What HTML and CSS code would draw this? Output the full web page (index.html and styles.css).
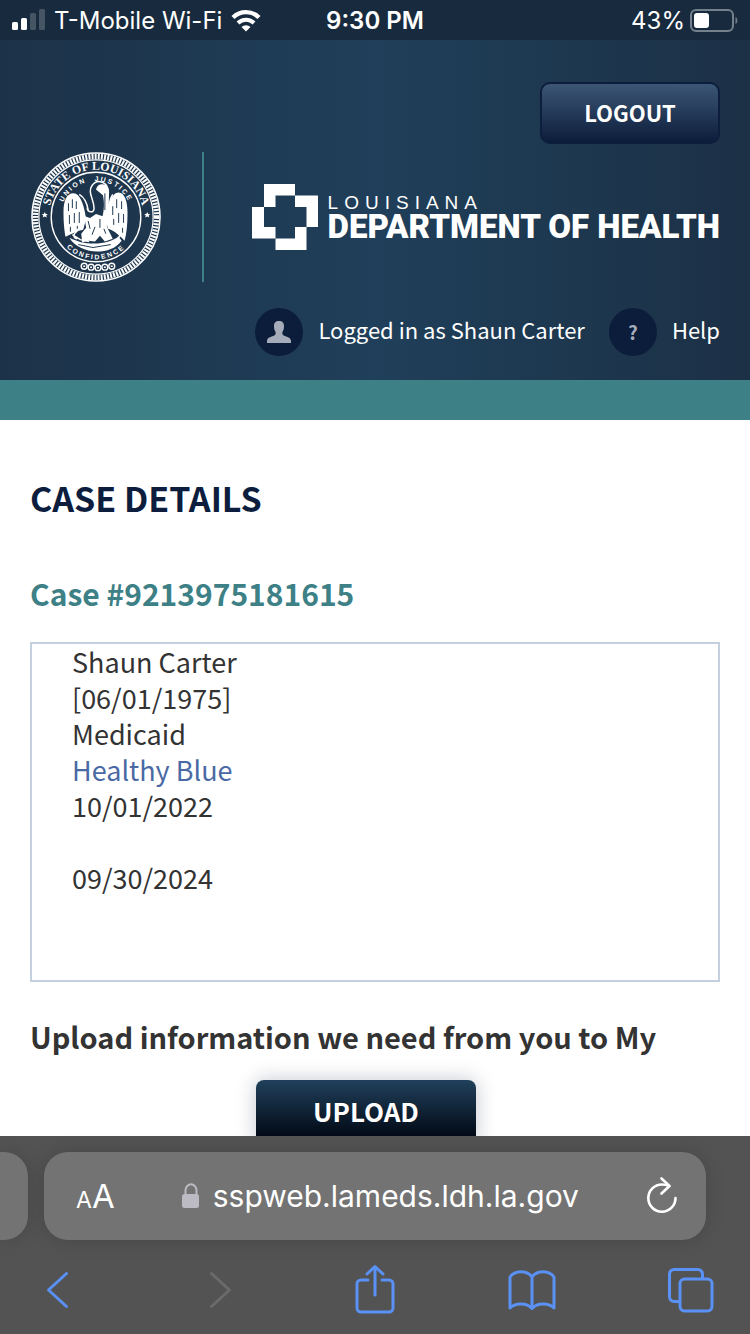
FILE: index.html
```
<!DOCTYPE html>
<html lang="en">
<head>
    <meta charset="UTF-8">
    <meta name="viewport" content="width=device-width, initial-scale=1.0">
    <title>Case Details</title>
    <link rel="stylesheet" href="styles.css">
</head>
<body>
    <div class="status-bar">
        <div class="carrier">
            <svg class="signal" width="33" height="22" viewBox="0 0 33 22">
                <rect x="0" y="13" width="6" height="8" rx="1.5" fill="#fff"/>
                <rect x="9" y="9" width="6" height="12" rx="1.5" fill="#fff"/>
                <rect x="18" y="4" width="6" height="17" rx="1.5" fill="#465564"/>
                <rect x="27" y="0" width="6" height="21" rx="1.5" fill="#465564"/>
            </svg>
            <span>T-Mobile Wi-Fi</span>
            <svg width="30" height="23" viewBox="0 0 30 23">
                <path d="M2 8.5a18.5 18.5 0 0 1 26 0" fill="none" stroke="#fff" stroke-width="4.4"/>
                <path d="M7 14a11.4 11.4 0 0 1 16 0" fill="none" stroke="#fff" stroke-width="4"/>
                <path d="M10.5 18a6.5 6.5 0 0 1 9 0L15 22.5z" fill="#fff"/>
            </svg>
        </div>
        <div class="clock">9:30 PM</div>
        <div class="battery">
            <span>43%</span>
            <svg width="48" height="23" viewBox="0 0 48 23">
                <rect x="1" y="1" width="42" height="21" rx="5" fill="none" stroke="#74808b" stroke-width="2"/>
                <rect x="4" y="4" width="15" height="15" rx="3" fill="#fff"/>
                <path d="M45.500 8c2.500 1 2.500 6 0 7z" fill="#74808b"/>
            </svg>
        </div>
    </div>

    <header class="header">
        <button type="button" class="logout">LOGOUT</button>

        <div class="brand">
            <svg class="seal" width="132" height="130" viewBox="0 0 132 132" role="img" aria-label="State of Louisiana seal">
                <defs>
                    <path id="arcOuter" d="M18 66a48 48 0 0 1 96 0"/>
                    <path id="arcInner" d="M29.500 66a36.500 36.500 0 0 1 73 0"/>
                    <path id="arcBottom" d="M23 66a43 43 0 0 0 86 0"/>
                </defs>
                <g fill="none" stroke="#fff">
                    <circle cx="66" cy="66" r="65" stroke-width="1.6"/>
                    <circle cx="66" cy="66" r="61.500" stroke-width="5.500" stroke-dasharray="2 1.200"/>
                    <circle cx="66" cy="66" r="58" stroke-width="1.200"/>
                    <circle cx="66" cy="66" r="45.500" stroke-width="1.400"/>
                </g>
                <g fill="#fff">
                    <text class="seal-outer"><textPath href="#arcOuter" startOffset="50%">STATE OF LOUISIANA</textPath></text>
                    <text class="seal-inner"><textPath href="#arcInner" startOffset="50%">UNION&nbsp; JUSTICE</textPath></text>
                    <text class="seal-inner"><textPath href="#arcBottom" startOffset="50%">CONFIDENCE</textPath></text>
                    <path d="M14 61l1 2h2l-1.500 1.500.500 2-2-1-2 1 .500-2L11 63h2zM118 61l1 2h2l-1.500 1.500.500 2-2-1-2 1 .500-2-1.500-1.500h2z"/>
                    <!-- wings -->
                    <path d="M56 68C54 54 50 42 43 42c-7 0-10 8-10 19 0 11 1 20 2 25 7-3 12-6 18-7z"/>
                    <path d="M76 68c1-14 6-27 13-27 6 0 9 9 9 20 0 13-1 22-3 29-5-5-10-10-17-12z"/>
                    <!-- body and nest -->
                    <path d="M54 65l6 2 6-4 6 2 6-2 1 8-2 5 6 12-8 3-5-6-5 6-7-1-6 2-1-9 5-6z"/>
                    <path d="M39 87c9 4 14 6 25 6s18-3 25-7l3 4c-6 8-15 11-25 11S44 96 39 87z"/>
                    <path d="M66 38c1-4 4-6 8-5 5 1 6 6 5 12l-1 18-6 6c2-9 3-16 1-25z"/>
                </g>
                <g fill="none" stroke="#fff" stroke-width="1.500">
                    <path d="M57 57c1 5 7 5 7 0 0-9-7-16-2-23 5-7 15-4 16 4 1 9-1 17 1 23"/>
                    <path d="M49 43c5 3 8 9 9 16M83 43c-4 6-4 12-4 19M42 84l8 5 9 2M87 82c4 1 4 4 1 5M47 80c-4 3-5 7 0 8"/>
                </g>
                <g fill="none" stroke="#1d374f" stroke-width="1">
                    <path d="M38 52v8M42 48v9M46 50v8M39 64v9M44 62v10M49 61v11M40 76v5M47 75v3M92 50v8M87 48v9M83 55v9M94 63v9M89 62v10M84 68v6M93 77v5M71 43v16M75 42v17M48 94l15 3 18-3M58 70l2 8M70 68v9M65 76l-3 8M74 78l2 5"/>
                </g>
                <g fill="none" stroke="#fff" stroke-width="1.400">
                    <circle cx="54" cy="116" r="3"/>
                    <circle cx="61" cy="117" r="3"/>
                    <circle cx="68" cy="117.500" r="3"/>
                    <circle cx="75" cy="117" r="3"/>
                    <circle cx="82" cy="116" r="3"/>
                    <path d="M53 116h2M60 117h2M67 117.500h2M74 117h2M81 116h2"/>
                </g>
            </svg>
            <div class="divider"></div>
            <div class="ldh">
                <svg width="66" height="66" viewBox="0 0 66 66" fill="#fff">
                    <path d="M12 0H43V11.500H23.500V23H12z"/>
                    <path d="M43 11.500H66V43H54.500V23H43z"/>
                    <path d="M54.500 43V66H23.500V54.500H43V43z"/>
                    <path d="M0 23H12V43H23.500V54.500H0z"/>
                </svg>
                <div class="ldh-name">
                    <span class="ldh-state">LOUISIANA</span>
                    <span class="ldh-dept">DEPARTMENT OF HEALTH</span>
                </div>
            </div>
        </div>

        <div class="user-row">
            <span class="circle">
                <svg width="24" height="22" viewBox="0 0 24 22">
                    <path d="M12 0c3.500 0 5 2 5 5 0 3-.500 4-1.300 5.500-.700 1.500-.500 3 1 4C20 16 24 16.500 24 20v2H0v-2c0-3.500 4-4 7.300-5.500 1.500-1 1.700-2.500 1-4C7.500 9 7 8 7 5c0-3 1.500-5 5-5z" fill="#a5abb9"/>
                </svg>
            </span>
            <span class="label">Logged in as Shaun Carter</span>
            <a href="#" class="help"><span class="circle">?</span><span class="label">Help</span></a>
        </div>
    </header>

    <div class="stripe"></div>

    <main class="content">
        <h1>CASE DETAILS</h1>
        <h2>Case #9213975181615</h2>
        <div class="case-box">
            <div>Shaun Carter</div>
            <div>[06/01/1975]</div>
            <div>Medicaid</div>
            <div><a href="#">Healthy Blue</a></div>
            <div>10/01/2022</div>
            <br>
            <div>09/30/2024</div>
        </div>
        <h3>Upload information we need from you to My</h3>
        <div class="upload-row">
            <button type="button" class="upload">UPLOAD</button>
        </div>
    </main>

    <footer class="browser">
        <div class="tabs">
            <div class="prev-tab"></div>
            <div class="address">
                <button type="button" class="text-size" aria-label="Text size"><small>A</small>A</button>
                <div class="url">
                    <svg width="18" height="26" viewBox="0 0 18 26">
                        <path d="M3.500 12V7.500a5.500 6.300 0 0 1 11 0V12" fill="none" stroke="#bcbbc3" stroke-width="2"/>
                        <rect x="0" y="11" width="17" height="14" rx="2.500" fill="#bcbbc3"/>
                    </svg>
                    <span>sspweb.lameds.ldh.la.gov</span>
                </div>
                <button type="button" aria-label="Reload">
                    <svg width="32" height="38" viewBox="0 0 32 38" fill="none" stroke="#fff" stroke-width="2.600" stroke-linecap="round" stroke-linejoin="round">
                        <path d="M29.500 21A13.600 13.600 0 1 1 16 7.500c3 0 5 .500 7 1.500"/>
                        <path d="M15.500 1.500l8 7.500-8 7.500"/>
                    </svg>
                </button>
            </div>
        </div>
        <nav class="toolbar">
            <button type="button" aria-label="Back">
                <svg width="48" height="48" viewBox="0 0 48 48"><path d="M32.500 7.500L14.500 24l18 16.500"/></svg>
            </button>
            <button type="button" aria-label="Forward" disabled>
                <svg width="48" height="48" viewBox="0 0 48 48"><path d="M19.500 7.500L37.500 24l-18 16.500"/></svg>
            </button>
            <button type="button" aria-label="Share">
                <svg width="48" height="48" viewBox="0 0 48 48"><path d="M18 14h-7a4 4 0 0 0-4 4v24a4 4 0 0 0 4 4h28a4 4 0 0 0 4-4V18a4 4 0 0 0-4-4h-7M25 29V1M17 8l8-7.500L33 8"/></svg>
            </button>
            <button type="button" aria-label="Bookmarks">
                <svg width="50" height="48" viewBox="0 0 50 48"><path d="M25 42.500V11C20 4 8 4 3 11v31c5-5.500 17-5.500 22 .500 5-6 17-6 22-.500V11C42 4 30 4 25 11"/></svg>
            </button>
            <button type="button" aria-label="Tabs">
                <svg width="48" height="48" viewBox="0 0 48 48"><path d="M13 35.500H8a4.500 4.500 0 0 1-4.500-4.500V8A4.500 4.500 0 0 1 8 3.500h24A4.500 4.500 0 0 1 36.500 8v4.500"/><rect x="14" y="13" width="32" height="32" rx="4.500"/></svg>
            </button>
        </nav>
    </footer>
</body>
</html>
```
FILE: styles.css
```
* {
    box-sizing: border-box;
}
body {
    margin: 0;
    height: 100vh;
    display: flex;
    flex-direction: column;
    overflow: hidden;
    font-family: "Noto Sans CJK SC", sans-serif;
    color: #333;
    background-color: #fff;
}
button {
    border: none;
    padding: 0;
    background: none;
    font-family: inherit;
    color: white;
    cursor: pointer;
}
svg {
    display: block;
}
h1, h2, h3 {
    margin: 0;
}
a {
    color: #4a6aa5;
    text-decoration: none;
}

/* phone status bar */
.status-bar {
    flex: none;
    display: grid;
    grid-template-columns: 1fr auto 1fr;
    align-items: center;
    height: 40px;
    padding: 0 12px;
    background-color: #182b3e;
    color: white;
    font-family: Inter, sans-serif;
    font-size: 24px;
}
.carrier, .battery {
    display: flex;
    align-items: center;
    gap: 9px;
    white-space: nowrap;
}
.battery {
    justify-content: flex-end;
    gap: 5px;
}
.clock {
    font-weight: 600;
}

/* site header */
.header {
    flex: none;
    padding: 42px 30px 24px;
    background: linear-gradient(to right, #1c3248 0%, #203f5a 50%, #1d384f 75%, #1c3046 100%);
    color: white;
}
.logout {
    display: block;
    width: 180px;
    height: 62px;
    margin-left: auto;
    padding-bottom: 2px;
    border: 2px solid #0c1d3d;
    border-radius: 10px;
    background: linear-gradient(#3c5675, #0c1d3b);
    font-size: 22px;
    font-weight: bold;
}
.brand {
    display: flex;
    align-items: center;
    margin-top: 8px;
}
.seal {
    flex: none;
}
.seal-outer, .seal-inner {
    font-family: "Liberation Serif", serif;
    font-size: 12px;
    font-weight: bold;
    text-anchor: middle;
}
.seal-inner {
    font-family: "Liberation Sans", sans-serif;
    font-size: 7px;
    letter-spacing: 2px;
}
.divider {
    width: 2px;
    height: 130px;
    margin-left: 40px;
    background-color: #3d8086;
}
.ldh {
    display: flex;
    align-items: center;
    gap: 10px;
    margin-left: auto;
}
.ldh-name {
    display: flex;
    flex-direction: column;
    white-space: nowrap;
}
.ldh-state {
    font-family: "Liberation Sans", sans-serif;
    font-size: 19px;
    line-height: 20px;
    letter-spacing: 6px;
}
.ldh-dept {
    font-family: Roboto, sans-serif;
    font-size: 33px;
    line-height: 28px;
    font-weight: 900;
}
.user-row {
    display: flex;
    align-items: center;
    justify-content: flex-end;
    margin-top: 26px;
    font-size: 22px;
}
.label {
    padding-bottom: 6px;
}
.circle {
    display: flex;
    align-items: center;
    justify-content: center;
    width: 48px;
    height: 48px;
    margin-right: 15px;
    border-radius: 50%;
    background-color: #0c1d3b;
    color: #a5abb9;
    font-size: 19px;
    line-height: 44px;
    font-weight: bold;
}
.help {
    display: flex;
    align-items: center;
    margin-left: 24px;
    color: white;
}
.stripe {
    flex: none;
    height: 40px;
    background-color: #3d8086;
}

/* case page */
.content {
    flex: 1;
    min-height: 0;
    overflow: hidden;
    padding: 50px 30px 0;
}
h1 {
    font-size: 34px;
    line-height: 56px;
    color: #0c1d3d;
}
h2 {
    margin-top: 45px;
    font-size: 30px;
    line-height: 44px;
    color: #3d8086;
}
.case-box {
    margin-top: 27px;
    padding: 0 40px 84px;
    border: 2px solid #c5d0df;
    font-size: 27px;
    line-height: 36px;
}
h3 {
    margin-top: 34px;
    font-size: 29px;
    line-height: 40px;
    white-space: nowrap;
}
.upload-row {
    display: flex;
    justify-content: center;
    padding: 24px 18px 40px 0;
}
.upload {
    width: 220px;
    height: 66px;
    padding-bottom: 6px;
    border-radius: 8px;
    background: linear-gradient(#20405b, #020a16 85%);
    box-shadow: 0 0 20px rgba(12, 29, 61, 0.25);
    font-size: 26px;
    font-weight: bold;
}

/* browser bar */
.browser {
    flex: none;
    padding: 16px 0 8px;
    background-color: #535353;
    color: white;
    font-family: Inter, sans-serif;
}
.tabs {
    display: flex;
    gap: 16px;
    padding-right: 44px;
}
.prev-tab {
    width: 28px;
    border-radius: 0 24px 24px 0;
    background-color: #737373;
    box-shadow: 0 0 20px rgba(0, 0, 0, 0.15);
}
.address {
    flex: 1;
    display: flex;
    align-items: center;
    justify-content: space-between;
    height: 88px;
    padding: 0 28px 0 32px;
    border-radius: 24px;
    background-color: #737373;
    box-shadow: 0 0 20px rgba(0, 0, 0, 0.15);
}
.text-size {
    font-size: 33px;
}
.text-size small {
    font-size: 23px;
}
.url {
    display: flex;
    align-items: center;
    gap: 13px;
    font-size: 30px;
}
.toolbar {
    display: flex;
    justify-content: space-between;
    padding: 26px 28px 12px 26px;
}
.toolbar button {
    display: flex;
    justify-content: center;
    width: 64px;
}
.toolbar svg {
    overflow: visible;
    fill: none;
    stroke: #5a91f5;
    stroke-width: 3;
    stroke-linecap: round;
    stroke-linejoin: round;
}
.toolbar button:disabled svg {
    stroke: #6b6b6b;
}
```
